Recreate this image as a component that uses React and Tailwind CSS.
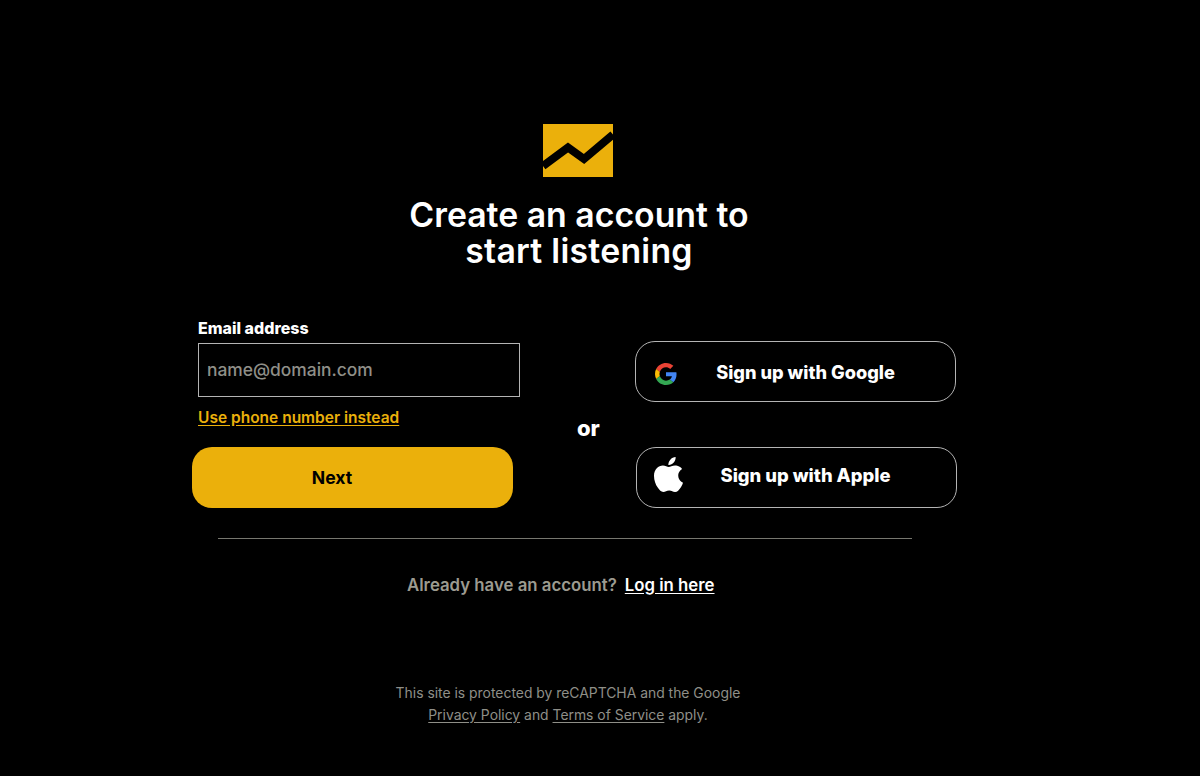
import React from "react";

function Logo() {
  return (
    <svg width="70" height="53" viewBox="0 0 70 53" className="block">
      <rect width="70" height="53" fill="#ebb00b" />
      <path d="M0 42 L25 23.500 L41 35 L70 10.500" fill="none" stroke="#000" strokeWidth="8" />
    </svg>
  );
}

function GoogleIcon() {
  return (
    <svg width="22" height="22" viewBox="0 0 48 48" className="block">
      <path fill="#EA4335" d="M24 9.500c3.540 0 6.710 1.220 9.210 3.600l6.850-6.850C35.900 2.380 30.470 0 24 0 14.620 0 6.510 5.380 2.560 13.220l7.980 6.190C12.430 13.720 17.740 9.500 24 9.500z" />
      <path fill="#4285F4" d="M46.980 24.550c0-1.570-.15-3.090-.38-4.550H24v9.020h12.940c-.58 2.960-2.260 5.480-4.780 7.180l7.730 6c4.510-4.180 7.090-10.360 7.090-17.650z" />
      <path fill="#FBBC05" d="M10.530 28.590c-.48-1.450-.76-2.990-.76-4.590s.27-3.140.76-4.590l-7.980-6.190C.92 16.460 0 20.120 0 24c0 3.880.92 7.540 2.560 10.780l7.970-6.190z" />
      <path fill="#34A853" d="M24 48c6.480 0 11.930-2.130 15.890-5.810l-7.730-6c-2.150 1.450-4.920 2.300-8.160 2.300-6.260 0-11.570-4.220-13.470-9.910l-7.980 6.190C6.510 42.620 14.620 48 24 48z" />
    </svg>
  );
}

function AppleIcon() {
  return (
    <svg width="29" height="35" viewBox="0 0 814 1000" preserveAspectRatio="none" className="block">
      <path fill="#fff" d="M788.100 340.900c-5.800 4.500-108.200 62.200-108.200 190.500 0 148.400 130.300 200.900 134.200 202.200-.6 3.200-20.700 71.900-68.700 141.900-42.800 61.600-87.500 123.100-155.500 123.100s-85.500-39.500-164-39.500c-76.500 0-103.700 40.800-165.900 40.800s-105.600-57-155.500-127C46.700 790.700 0 663 0 541.800c0-194.400 126.400-297.500 250.800-297.500 66.100 0 121.200 43.400 162.700 43.400 39.500 0 101.100-46 176.300-46 28.500 0 130.900 2.600 198.300 99.200zm-234-181.500c31.100-36.900 53.100-88.100 53.100-139.300 0-7.100-.6-14.300-1.900-20.100-50.600 1.900-110.800 33.700-147.100 75.800-28.500 32.400-55.100 83.600-55.100 135.500 0 7.800 1.300 15.600 1.900 18.100 3.200.6 8.400 1.300 13.600 1.300 45.400 0 102.500-30.400 135.500-71.300z" />
    </svg>
  );
}

function SocialButton({ icon, label, iconClass, labelClass, className }) {
  return (
    <button className={`relative flex h-[61px] w-[321px] items-center justify-center rounded-[20px] border border-[#b4b4b4] bg-black text-white ${className}`}>
      <span className={`absolute ${iconClass}`}>{icon}</span>
      <span className={`text-[18.200px] font-extrabold leading-6 ${labelClass}`}>{label}</span>
    </button>
  );
}

export default function App() {
  return (
    <div className="flex h-[776px] w-full flex-col overflow-hidden bg-black font-['Inter',sans-serif]">
      <div className="flex flex-col items-center pt-[124px]">
        <div className="ml-[-44px]">
          <Logo />
        </div>
        <h1 className="ml-[-42px] mt-[20px] text-center text-[33.800px] font-semibold leading-[36px] text-white">
          Create an account to
          <br />
          <span className="tracking-[0.250px]">start listening</span>
        </h1>
      </div>

      <div className="mt-[49px] flex pl-[192px]">
        <div className="flex w-[328px] flex-col">
          <label className="ml-[6px] text-[16px] font-extrabold leading-[20px] text-white">Email address</label>
          <div className="ml-[6px] mt-[5px] flex h-[54px] w-[322px] items-center border border-[#b4b4b4] bg-black pl-[8px] text-[17.400px] font-medium leading-6 text-[#8f8f88]">
            name@domain.com
          </div>
          <a className="ml-[6px] mt-[11px] text-[15.500px] font-semibold leading-[20px] text-[#ebb00b] underline underline-offset-2">
            Use phone number instead
          </a>
          <button className="mt-[19px] h-[61px] w-[321px] rounded-[20px] bg-[#ebb00b] pr-[41px] text-[17.600px] font-bold leading-6 text-black">
            Next
          </button>
        </div>
        <div className="ml-[57px] mt-[96px] w-[24px] text-[22px] font-extrabold leading-7 text-white">or</div>
        <div className="ml-[34px] mt-[23px] flex flex-col gap-[45px]">
          <SocialButton icon={<GoogleIcon />} label="Sign up with Google" iconClass="left-[19px] top-[21px]" labelClass="ml-[20px]" className="" />
          <SocialButton icon={<AppleIcon />} label="Sign up with Apple" iconClass="left-[17px] top-[9px]" labelClass="ml-[18px] -translate-y-[3px] text-[18.400px]" className="ml-px" />
        </div>
      </div>

      <div className="ml-[218px] mt-[30px] h-px w-[694px] bg-[#77776f]" />

      <div className="ml-[407px] mt-[34px] flex text-[16.800px] font-semibold leading-6">
        <span className="text-[#9c9b90]">Already have an account?</span>
        <a className="ml-[8px] text-white underline underline-offset-2">Log in here</a>
      </div>

      <div className="ml-[-64px] mt-[85px] text-center text-[13.900px] leading-[22px] text-[#8f8f88]">
        <p>This site is protected by reCAPTCHA and the Google</p>
        <p>
          <a className="underline underline-offset-2">Privacy Policy</a> and{" "}
          <a className="underline underline-offset-2">Terms of Service</a> apply.
        </p>
      </div>
    </div>
  );
}
